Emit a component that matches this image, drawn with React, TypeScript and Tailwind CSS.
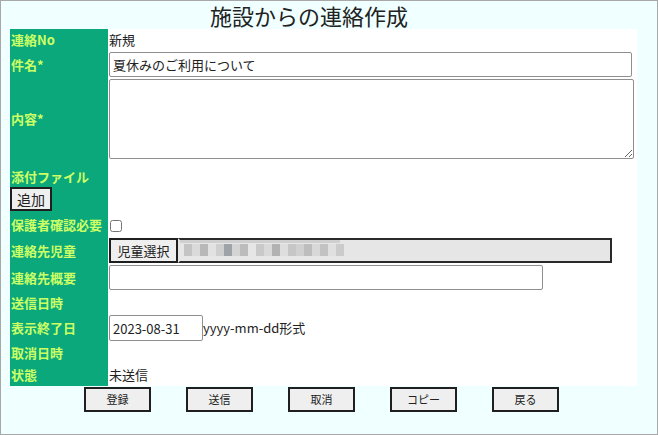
import React from 'react';

const labelCls = 'bg-[#0aa87a] text-[#ccff66] font-bold text-[13px] pl-[1px] flex items-center';

const mosaic = [
  '#c4c4c4', '#dadada', '#b8b8b8', '#e2e2e2', '#cfcfcf', '#9ea3aa', '#d4d4d4', '#bcbcbc',
  '#e6e6e6', '#c9c9c9', '#d9d9d9', '#b2b2b2', '#dedede', '#c6c6c6', '#d0d0d0', '#bdbdbd',
  '#d8d8d8', '#c2c2c2', '#e0e0e0', '#cbcbcb',
];

const Row: React.FC<{ label: React.ReactNode; h: string; children?: React.ReactNode }> = ({ label, h, children }) => (
  <div className={`grid grid-cols-[98px_1fr] ${h}`}>
    <div className={labelCls}>{label}</div>
    <div className="flex items-center pl-[1px] text-[13px] text-[#222]">{children}</div>
  </div>
);

export default function App() {
  return (
    <div
      className="w-[658px] h-[435px] bg-[#f0ffff] border border-[#a8a8a8] overflow-hidden"
      style={{ fontFamily: '"Noto Sans CJK JP", "Noto Sans", sans-serif' }}
    >
      <div className="h-[28px] flex justify-center items-center pr-[40px] text-[22px] text-[#222] leading-none">
        施設からの連絡作成
      </div>

      <div className="ml-[9px] w-[627px] bg-white">
        <Row label="連絡No" h="h-[22px]">新規</Row>
        <Row label="件名*" h="h-[27px]">
          <input
            defaultValue="夏休みのご利用について"
            className="w-[523px] h-[25px] border border-[#8f8f8f] rounded-[2px] px-[3px] text-[13px] text-[#222] outline-none"
          />
        </Row>
        <Row label="内容*" h="h-[82px]">
          <textarea className="w-[525px] h-[80px] border border-[#8f8f8f] rounded-[2px] outline-none" />
        </Row>
        <div className="grid grid-cols-[98px_1fr] h-[53px]">
          <div className="bg-[#0aa87a] flex flex-col">
            <div className="text-[#ccff66] font-bold text-[13px] pl-[1px] mt-[8px] leading-[18px]">添付ファイル</div>
            <button className="mt-[1px] w-[42px] h-[24px] bg-[#efefef] border-2 border-[#1f1f1f] text-[14px] text-[#222] leading-none">
              追加
            </button>
          </div>
          <div />
        </div>
        <Row label="保護者確認必要" h="h-[24px]">
          <input type="checkbox" className="w-[12px] h-[12px] ml-[1px] mt-[1px]" />
        </Row>
        <Row label="連絡先児童" h="h-[27px]">
          <button className="w-[69px] h-[25px] bg-[#efefef] border-2 border-[#1f1f1f] text-[13px] text-[#222] leading-none shrink-0">
            児童選択
          </button>
          <div className="w-[434px] h-[25px] bg-[#e6e6e6] border-2 border-[#2a2a2a] border-l-[#e6e6e6] flex flex-col">
            <div className="h-[3px] w-[160px] bg-[#cfcfcf]" />
            <div className="flex items-center h-[14px] pl-[4px]">
              {mosaic.map((c, i) => (
                <span key={i} className="h-[12px] w-[8px]" style={{ backgroundColor: c }} />
              ))}
            </div>
          </div>
        </Row>
        <Row label="連絡先概要" h="h-[27px]">
          <input className="w-[434px] h-[25px] border border-[#8f8f8f] rounded-[2px] outline-none" />
        </Row>
        <Row label="送信日時" h="h-[23px]" />
        <Row label="表示終了日" h="h-[28px]">
          <input
            defaultValue="2023-08-31"
            className="w-[94px] h-[26px] border border-[#8f8f8f] rounded-[2px] px-[3px] text-[13px] text-[#222] outline-none"
          />
          <span>yyyy-mm-dd形式</span>
        </Row>
        <Row label="取消日時" h="h-[22px]" />
        <Row label="状態" h="h-[22px]">未送信</Row>
      </div>

      <div className="ml-[9px] w-[627px] flex justify-center gap-[35px] mt-[1px] pr-[4px]">
        {['登録', '送信', '取消', 'コピー', '戻る'].map((t) => (
          <button
            key={t}
            className="w-[67px] h-[25px] bg-[#efefef] border-2 border-[#1f1f1f] text-[11px] text-[#222] leading-none"
          >
            {t}
          </button>
        ))}
      </div>
    </div>
  );
}
